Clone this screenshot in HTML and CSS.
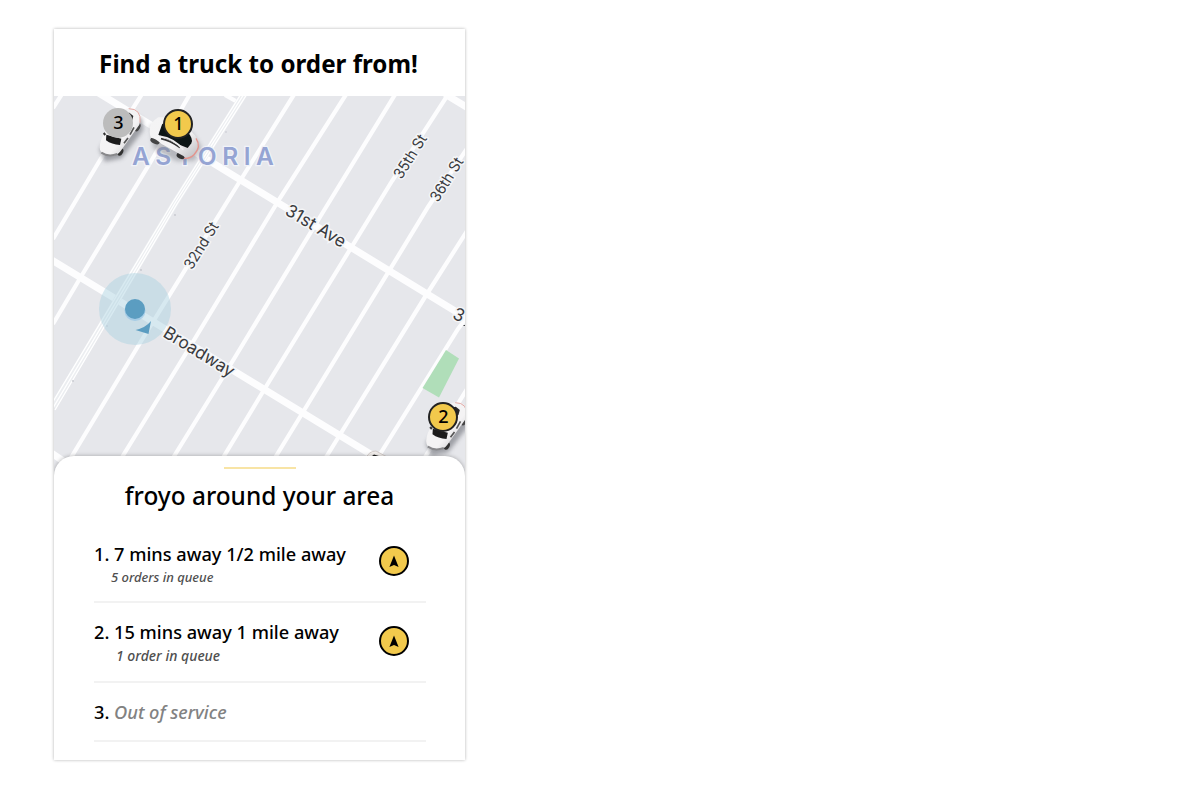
FILE: index.html
```html
<!DOCTYPE html>
<html lang="en">
<head>
<meta charset="utf-8">
<title>Find a truck</title>
<link rel="stylesheet" href="styles.css">
</head>
<body>
<main class="card">
  <header class="header"><h1 class="title">Find a truck to order from!</h1></header>
  <svg class="map" viewBox="54 96 411 380" width="411" height="380">
    <defs>
      <filter id="soft" x="-30%" y="-30%" width="160%" height="160%"><feGaussianBlur stdDeviation="7"/></filter>
      <filter id="fine"><feGaussianBlur stdDeviation="1.6"/></filter>
      <linearGradient id="body" x1="0" y1="0" x2="1" y2="1"><stop offset="0" stop-color="#f4f4f5"/><stop offset=".6" stop-color="#f4f3f4"/><stop offset="1" stop-color="#b9b9bd"/></linearGradient>
      <g id="car">
        <path d="M148 178L225 70 275 85 280 120 215 205 165 215Z" fill="#85878e" opacity=".75" filter="url(#soft)"/>
        <g filter="url(#fine)">
        <ellipse cx="211" cy="186" rx="8" ry="12" transform="rotate(28 211 186)" fill="#333"/>
        <ellipse cx="263" cy="112" rx="7" ry="13" transform="rotate(28 263 112)" fill="#444"/>
        <path d="M149 172Q150 145 170 120L214 62Q235 48 260 60Q276 76 268 104L212 183Q198 203 168 195Q149 190 149 172Z" fill="url(#body)"/>
        <path d="M154 188Q175 202 202 192" fill="none" stroke="#88888b" stroke-width="6"/>
        <path d="M169 134L214 146 210 165Q185 164 168 151Z" fill="#1b1b1d"/>
        <path d="M200 75L238 68 250 78 246 92 230 108Z" fill="#252527"/>
        <path d="M222 160L234 144M240 134L252 112" stroke="#555" stroke-width="5"/>
        <path d="M236 56Q275 56 270 98" fill="none" stroke="#e3aaa5" stroke-width="3"/>
        <path d="M161 129l5 6" stroke="#333" stroke-width="6"/>
        </g>
      </g>
    </defs>
    <rect x="54" y="96" width="411" height="380" fill="#e6e7eb"/>
    <g class="streets">
      <path d="M62 94L53 108M142 94L100 160 53 239M190 94L150 163 82 275 53 324M295 93L240 181 143 338 66 466M347 93L280 198 188 350 116 467M396 93L320 217 223 377 168 466M449 93L392 181 267 385 218 466M468 147L428 207 300 417 270 466M467 231L425 297 320 467M467 317L458 329 372 467M467 389L419 467M225 95L241 104"/>
    </g>
    <g class="avenues"><path d="M97 92L468 319M50 259L390 466M445 94L468 108M50 452L66 463"/></g>
    <path class="rail-bed" d="M244 94L175 203 53 407"/>
    <path class="rail" d="M241 94L173 202 51 405M244 94L175 203 53 408M247 94L177 204 55 410"/>
    <g fill="#c5c7cd"><circle cx="226" cy="132" r=".8"/><circle cx="175" cy="215" r=".9"/><circle cx="141" cy="270" r=".9"/><circle cx="107" cy="326" r=".8"/><circle cx="73" cy="381" r=".9"/></g>
    <path d="M446 350L459 358.5 439 397.500 422.500 388Z" fill="#b0deb9"/>
    <text class="district" x="132" y="165">ASTORIA</text>
    <g class="labels">
      <text class="small" transform="translate(192 270.500) rotate(-58.500)" textLength="52" lengthAdjust="spacingAndGlyphs">32nd St</text>
      <text class="small" transform="translate(401.500 180) rotate(-58)" textLength="49" lengthAdjust="spacingAndGlyphs">35th St</text>
      <text class="small" transform="translate(438 203) rotate(-58)" textLength="49" lengthAdjust="spacingAndGlyphs">36th St</text>
      <text transform="translate(284 214) rotate(30.500)" textLength="67" lengthAdjust="spacingAndGlyphs">31st Ave</text>
      <text transform="translate(162 336) rotate(31.500)" textLength="80" lengthAdjust="spacingAndGlyphs">Broadway</text>
      <text transform="translate(451.500 318) rotate(25)">3</text>
    </g>
    <path d="M463.500 325.500h1.500" stroke="#3a3b3e"/>
    <circle cx="135" cy="309" r="36" fill="#a8d0df" fill-opacity=".45"/>
    <circle cx="135" cy="310.500" r="10.500" fill="#8dc1e6" opacity=".6"/>
    <circle cx="135" cy="309" r="10" fill="#5b9dc1"/>
    <path d="M135.500 330Q146 327.500 151 321L148.500 334Z" fill="#5b9dc1"/>
    <use href="#car" transform="translate(50 90) scale(.33333)"/>
    <use href="#car" transform="translate(376.500 384) scale(.33333)"/>
    <g transform="translate(50 90) scale(.33333)">
      <path d="M300 105L425 125 455 170 435 212 380 214 310 175Z" fill="#85878e" opacity=".5" filter="url(#soft)"/>
      <g filter="url(#fine)">
      <ellipse cx="315" cy="153" rx="15" ry="8" transform="rotate(25 315 153)" fill="#444"/>
      <ellipse cx="392" cy="198" rx="13" ry="8" transform="rotate(25 392 198)" fill="#333"/>
      <path d="M299 125Q296 99 325 82L352 82Q400 108 425 125Q447 144 446 170Q440 202 407 205Q399 196 385 190L335 162Q318 146 303 143Q299 135 299 125Z" fill="url(#body)"/>
      <path d="M337 101L410 122Q432 147 424 160L413 174Q376 160 325 134Z" fill="#111214"/>
      <path d="M333 146Q360 151 390 173" fill="none" stroke="#333" stroke-width="5"/>
      <path d="M330 139Q372 145 400 179" fill="none" stroke="#efefef" stroke-width="5"/>
      <path d="M438 145Q455 170 432 194Q420 206 402 205" fill="none" stroke="#e4938c" stroke-width="4"/>
      </g>
    </g>
    <path d="M366 458Q369 451 376 451L389 458Z" fill="#f3efed" stroke="#c7bfbb" stroke-width=".7"/><path d="M372 456L374 454.500 382 457Z" fill="#222"/>
    <circle cx="118" cy="123" r="15" fill="#bcbcbc"/>
    <circle class="pin" cx="178" cy="124" r="14"/>
    <circle class="pin" cx="443" cy="417" r="14"/>
    <g class="pin-text"><text x="118.300" y="129">3</text><text x="178.500" y="130">1</text><text x="443.500" y="423">2</text></g>
  </svg>
  <section class="sheet">
    <div class="handle"></div>
    <h2 class="subtitle">froyo around your area</h2>
    <ol class="list">
      <li class="row">
        <div class="info"><p class="trip">1. 7 mins away 1/2 mile away</p><p class="queue">5 orders in queue</p></div>
        <svg class="go" width="30" height="30" viewBox="0 0 30 30"><circle cx="15" cy="15" r="14"/><path d="M15 9.500L19.600 21 15 18.900 10.400 21Z"/></svg>
      </li>
      <li class="row second">
        <div class="info"><p class="trip">2. 15 mins away 1 mile away</p><p class="queue">1 order in queue</p></div>
        <svg class="go" width="30" height="30" viewBox="0 0 30 30"><circle cx="15" cy="15" r="14"/><path d="M15 9.500L19.600 21 15 18.900 10.400 21Z"/></svg>
      </li>
      <li class="row closed"><p class="trip">3. <em class="out">Out of service</em></p></li>
    </ol>
  </section>
</main>
</body>
</html>
```
FILE: styles.css
```css
* { box-sizing: border-box; margin: 0; padding: 0; }
body { min-height: 800px; background: #fff; font-family: "Noto Sans", sans-serif; color: #000; padding: 29px 0 0 54px; }
.card { width: 411px; height: 731px; background: #fff; box-shadow: 0 0 3px rgba(0,0,0,.3); display: flex; flex-direction: column; overflow: hidden; }
.header { height: 67px; flex: none; display: flex; justify-content: center; padding: 18px 2px 0 0; }
.title { font-size: 24.2px; line-height: 34px; font-weight: 700; white-space: nowrap; }
.map { display: block; flex: none; }
.streets, .avenues { fill: none; stroke: #fdfdfe; stroke-width: 4.2; }
.avenues { stroke-width: 7; }
.rail-bed { fill: none; stroke: #eceef1; stroke-width: 7; }
.rail { fill: none; stroke: #fff; stroke-width: 1.3; }
.district { font: 600 24.5px Inter, sans-serif; fill: #95a4d3; stroke: #f1f3f8; stroke-width: 2.5px; paint-order: stroke; letter-spacing: 5.600px; }
.labels { font: 400 17.5px Inter, sans-serif; fill: #3a3b3e; stroke: #f4f5f7; stroke-width: 3px; paint-order: stroke; }
.small { font-size: 15px; }
.pin { fill: #f2c94c; stroke: #222; stroke-width: 2; }
.pin-text { font-size: 18px; font-weight: 500; text-anchor: middle; }
.sheet { position: relative; height: 304px; margin-top: -20px; flex: none; background: #fff; border-radius: 20px 20px 0 0; box-shadow: 0 0 4px rgba(0,0,0,.3); display: flex; flex-direction: column; align-items: center; padding-top: 11px; }
.handle { width: 72px; height: 2px; background: #f8e4a5; margin-left: 1px; }
.subtitle { font-size: 24.4px; line-height: 34px; font-weight: 500; margin-top: 10px; }
.list { list-style: none; width: 332px; margin-left: 1px; margin-top: 31px; }
.row { height: 59px; border-bottom: 2px solid #f2f2f2; display: flex; justify-content: space-between; padding-right: 17px; }
.second { height: 80px; padding-top: 19px; }
.closed { height: 59px; padding-top: 19px; }
.trip { font-size: 18.2px; line-height: 24px; font-weight: 500; white-space: nowrap; margin-top: -2px; }
.queue { font-size: 13px; line-height: 18px; font-style: italic; font-weight: 500; color: #4f4f4f; margin: 2px 0 0 17px; }
.second .queue { font-size: 14px; margin: 3px 0 0 22px; }
.go { margin-top: 2px; flex: none; }
.second .go { margin-top: 4px; }
.go circle { fill: #f2c94c; stroke: #000; stroke-width: 2; }
.out { color: #828282; }
```
